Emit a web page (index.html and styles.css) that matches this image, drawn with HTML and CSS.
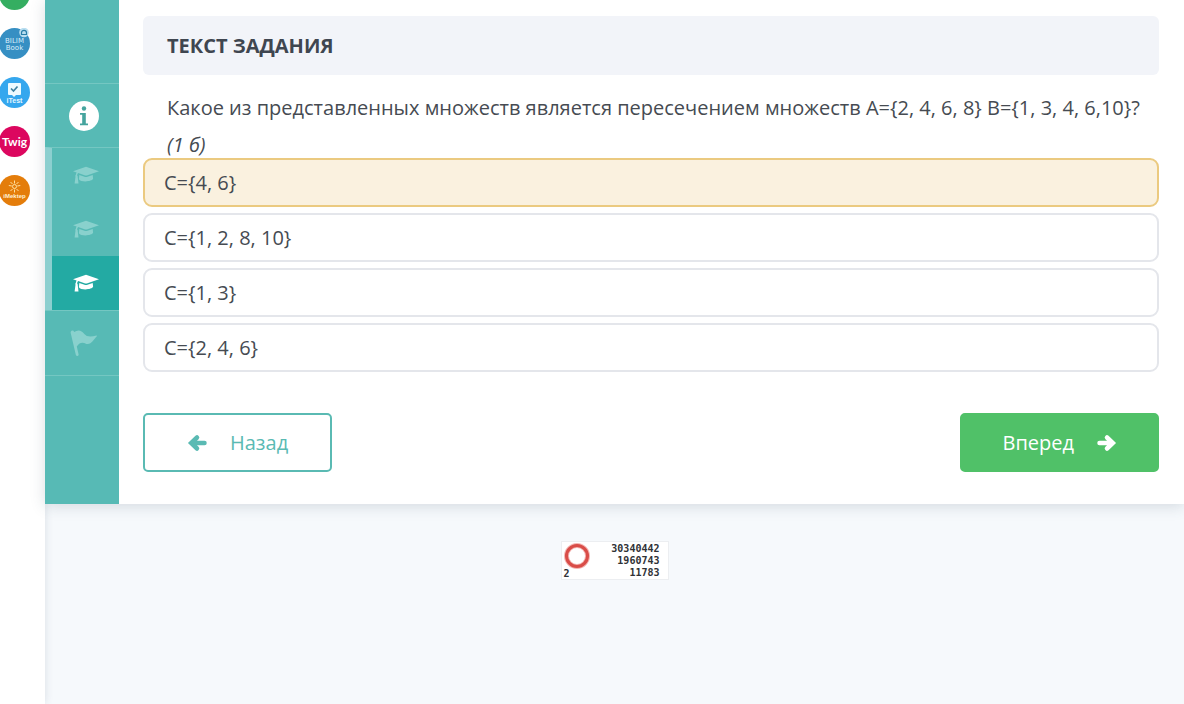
FILE: index.html
```html
<!DOCTYPE html>
<html lang="ru">
<head>
<meta charset="utf-8">
<meta name="viewport" content="width=device-width, initial-scale=1">
<title>Текст задания</title>
<link rel="stylesheet" href="styles.css">
</head>
<body>
<svg class="sprite" aria-hidden="true">
  <symbol id="cap" viewBox="0 0 26 18">
    <path d="M0 5.2 13 .8 26 5.2 14.5 9.2q-1.5.4-3 0L5.2 7.1q-1 .6-1.1 2.3.8.5.6 1.4l.8 6.6H1.6l.9-6.6q-.7-.9.3-1.7.1-1.500.8-2.500L0 5.200Z"/>
    <path d="M6.300 8.900 11.500 10.700q1.500.4 3 0l5.200-1.800.4 3.700c-.8 3.300-12.600 3.900-14.200.6Z"/>
  </symbol>
  <symbol id="flag" viewBox="0 0 28 27">
    <path d="M1.500.8q2-.8 2.600 1.200Q10-1.800 14.300 4q3.200 4.200 12.200 1.500.7 0 .3.800C23.500 9.500 21.500 15 16.500 14 12.500 12.200 10 12 6.800 16.500l1.800 8q.2 1.300-1.100 1.500-1.300.1-1.700-1.200L.7 3Q.4 1.500 1.500.8Z"/>
  </symbol>
  <symbol id="arrow" viewBox="0 0 20 18">
    <path d="M2.500 9H14M10 3.500 15.800 9 10 14.500" fill="none" stroke="currentColor" stroke-width="4.500" stroke-linecap="round" stroke-linejoin="miter"/>
  </symbol>
</svg>
<div class="layout">
  <nav class="services" aria-label="Сервисы">
    <a class="service service-green" href="#" aria-label="Сервис"></a>
    <a class="service" href="#" aria-label="BILIM Book">
      <svg viewBox="0 0 31 31">
        <circle cx="15.500" cy="15.500" r="15.500" fill="#368fc3"/>
        <circle cx="25" cy="4.500" r="4.800" fill="#b9def0"/>
        <path d="M22.500 6.500V4.800a2.500 2.500 0 0 1 5 0v1.700Z" fill="none" stroke="#287ea9" stroke-width="1.200"/>
        <text class="book-text" x="15.500" y="15" text-anchor="middle" fill="#d8eefa">BILIM</text>
        <text class="book-text" x="15.500" y="22" text-anchor="middle" fill="#d8eefa">Book</text>
      </svg>
    </a>
    <a class="service" href="#" aria-label="iTest">
      <svg viewBox="0 0 31 31">
        <circle cx="15.500" cy="15.500" r="15.500" fill="#35a7ee"/>
        <path d="M10 6h11q1 0 1 1v10q0 1-1 1h-4l-2 2-2-2h-3q-1 0-1-1V7q0-1 1-1Z" fill="#eefaff"/>
        <path d="m12 11.500 2.500 2.500 4-4.500" fill="none" stroke="#3f809f" stroke-width="1.700"/>
        <text class="test-text" x="15.500" y="25.500" text-anchor="middle" fill="#e5f7ff">iTest</text>
      </svg>
    </a>
    <a class="service" href="#" aria-label="Twig">
      <svg viewBox="0 0 31 31">
        <circle cx="15.500" cy="15.500" r="15.500" fill="#dc075f"/>
        <text class="twig-text" x="15.500" y="19.500" text-anchor="middle" fill="#fff">Twig</text>
      </svg>
    </a>
    <a class="service" href="#" aria-label="iMektep">
      <svg viewBox="0 0 31 31">
        <circle cx="15.500" cy="15.500" r="15.500" fill="#e47d0b"/>
        <g fill="none" stroke="#ffe0a0"><circle cx="15.500" cy="11.500" r="2"/><path d="M15.500 5.500v3m0 6v3M9.800 10.500l3 .5m5.500 0 3-.5M11.500 7l2 2m6-2-2 2m-6 7 2-2m6 2-2-2"/></g>
        <text class="mektep-text" x="15.500" y="22.500" text-anchor="middle" fill="#fff0d2">iMektep</text>
      </svg>
    </a>
  </nav>
  <div class="page">
    <div class="lesson">
      <nav class="steps" aria-label="Шаги урока">
        <div class="steps-top"></div>
        <a class="step step-info" href="#" aria-label="Информация">
          <svg width="30" height="30" viewBox="0 0 30 30"><circle cx="15" cy="15" r="15" fill="#fff"/><circle cx="15" cy="7.500" r="2.200" fill="#45a49e"/><path d="M11 12h5.800v10.500h2.200v1.800h-8v-1.800h2.200v-8.700H11Z" fill="#45a49e"/></svg>
        </a>
        <div class="tasks">
          <a class="step" href="#" aria-label="Задание 1"><svg width="26" height="18"><use href="#cap"/></svg></a>
          <a class="step" href="#" aria-label="Задание 2"><svg width="26" height="18"><use href="#cap"/></svg></a>
          <a class="step step-current" href="#" aria-label="Задание 3" aria-current="step"><svg width="26" height="18"><use href="#cap"/></svg></a>
        </div>
        <a class="step step-finish" href="#" aria-label="Завершение"><svg width="28" height="27"><use href="#flag"/></svg></a>
      </nav>
      <main class="content">
        <h1 class="heading">ТЕКСТ ЗАДАНИЯ</h1>
        <form>
          <fieldset class="task">
            <legend class="question">Какое из представленных множеств является пересечением множеств A={2, 4, 6, 8} B={1, 3, 4, 6,10}? <em class="points">(1 б)</em></legend>
            <div class="answers">
              <label class="answer"><input type="radio" name="answer" checked>C={4, 6}</label>
              <label class="answer"><input type="radio" name="answer">C={1, 2, 8, 10}</label>
              <label class="answer"><input type="radio" name="answer">C={1, 3}</label>
              <label class="answer"><input type="radio" name="answer">C={2, 4, 6}</label>
            </div>
          </fieldset>
          <div class="actions">
            <button class="button button-back" type="button"><svg class="arrow-left" width="20" height="18"><use href="#arrow"/></svg>Назад</button>
            <button class="button button-next" type="button">Вперед<svg width="20" height="18"><use href="#arrow"/></svg></button>
          </div>
        </form>
      </main>
    </div>
    <footer class="footer">
      <div class="counter">
        <div class="counter-mark">
          <svg width="26" height="26" viewBox="0 0 26 26"><circle cx="13" cy="13" r="10.500" fill="none" stroke="#f4b5b2" stroke-width="5"/><circle cx="13" cy="13" r="10.500" fill="none" stroke="#d94d48" stroke-width="3"/></svg>
          <span>2</span>
        </div>
        <div class="counter-values"><span>30340442</span><span>1960743</span><span>11783</span></div>
      </div>
    </footer>
  </div>
</div>
</body>
</html>
```
FILE: styles.css
```css
* { box-sizing: border-box; }
body {
  margin: 0;
  background: #f6f9fc;
  color: #464b52;
  font: 20px/37px "Open Sans", "Noto Sans", sans-serif;
}
svg { display: block; flex: none; }
.sprite { position: absolute; width: 0; height: 0; }
.layout { display: flex; min-height: 100vh; overflow: hidden; }
.services {
  display: flex;
  flex: none;
  flex-direction: column;
  gap: 18px;
  width: 45px;
  margin-top: -21px;
  background: #fff;
  box-shadow: 0 0 8px rgba(50, 70, 90, .14);
}
.service { width: 31px; height: 31px; margin-left: -1px; }
.service svg { width: 100%; height: 100%; }
.service-green { border-radius: 50%; background: #35ae61; }
.book-text { font: 7px/7px "DejaVu Sans", sans-serif; }
.test-text { font: bold 7px "Liberation Sans", sans-serif; }
.twig-text { font: bold 12px "Lato", sans-serif; }
.mektep-text { font: bold 6px "Liberation Sans", sans-serif; }

.page { flex: 1; min-width: 0; }
.lesson {
  display: flex;
  background: #fff;
  box-shadow: 0 2px 14px rgba(50, 70, 90, .18);
}
.steps { flex: none; width: 74px; background: #57bab5; }
.steps-top { height: 83px; }
.step {
  display: flex;
  align-items: center;
  justify-content: center;
  height: 54px;
  color: #89d1cd;
  fill: currentColor;
}
.step-info, .step-finish {
  height: 64px;
  padding-left: 4px;
  border-top: 1px solid #74c7c2;
}
.step-finish { height: 66px; border-bottom: 1px solid #74c7c2; }
.tasks { border-top: 1px solid #74c7c2; border-left: 7px solid #8ccfcf; }
.step-current { background: #23aaa3; color: #fff; }

.content { flex: 1; min-width: 0; padding: 16px 25px 32px 24px; }
.heading {
  margin: 0;
  padding: 11px 24px;
  border-radius: 6px;
  background: #f2f4f9;
  color: #3f4650;
  font-size: 20px;
  font-weight: 700;
  line-height: 37px;
}
.task { min-width: 0; margin: 0; padding: 0; border: 0; }
.question { padding: 14px 0 0 24px; }
.points { display: block; }
.answers {
  display: flex;
  flex-direction: column;
  gap: 6px;
  margin-top: -5px;
}
.answer {
  padding: 4px 19px;
  border: 2px solid #e4e6eb;
  border-radius: 9px;
  background: #fff;
}
.answer input { position: absolute; margin: 0; opacity: 0; }
.answer:has(input:checked) { border-color: #ebca80; background: #faf1df; }
.actions { display: flex; justify-content: space-between; margin-top: 41px; }
.button {
  display: flex;
  align-items: center;
  justify-content: center;
  gap: 23px;
  height: 59px;
  padding: 0 42px;
  border: 2px solid #5abab3;
  border-radius: 5px;
  background: #fff;
  color: #5abab3;
  font: inherit;
}
.button-next { padding: 0 40px; border-color: #50c168; background: #50c168; color: #fff; }
.arrow-left { transform: rotate(180deg); }
.footer { display: flex; justify-content: center; padding: 37px 0; }
.counter {
  display: flex;
  justify-content: space-between;
  width: 108px;
  padding: 1px 8px 0 2px;
  border: 1px solid #eceef1;
  background: #fff;
  color: #303236;
  font: bold 10px/12px "DejaVu Sans Mono", monospace;
}
.counter-mark { display: flex; flex-direction: column; line-height: 10px; }
.counter-values { display: flex; flex-direction: column; text-align: right; }
```
